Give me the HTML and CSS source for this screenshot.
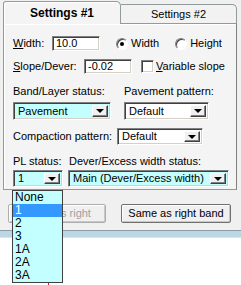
FILE: index.html
```html
<!DOCTYPE html>
<html>
<head>
<meta charset="utf-8">
<link rel="stylesheet" href="styles.css">
</head>
<body>
<div class="window">
  <div class="tabs">
    <div class="tab tab-active">Settings #1</div>
    <div class="tab tab-idle">Settings #2</div>
  </div>
  <div class="panel">
    <div class="row row1">
      <span class="lbl lbl-width"><u>W</u>idth:</span>
      <span class="edit edit-w">10.0</span>
      <span class="radio radio-on"></span><span class="rtext">Width</span>
      <span class="radio radio-off"></span><span class="rtext">Height</span>
    </div>
    <div class="row row2">
      <span class="lbl lbl-slope"><u>S</u>lope/Dever:</span>
      <span class="edit edit-s">-0.02</span>
      <span class="check"></span><span class="ctext"><u>V</u>ariable slope</span>
    </div>
    <div class="row row3">
      <span class="lbl lbl-band">Band/Layer status:</span>
      <span class="lbl">Pavement pattern:</span>
    </div>
    <div class="row row4">
      <span class="combo combo-cyan combo-band"><span class="ctxt">Pavement</span><span class="dd"></span></span>
      <span class="combo combo-pave"><span class="ctxt">Default</span><span class="dd"></span></span>
    </div>
    <div class="row row5">
      <span class="lbl lbl-comp">Compaction pattern:</span>
      <span class="combo combo-comp"><span class="ctxt">Default</span><span class="dd"></span></span>
    </div>
    <div class="row row6">
      <span class="lbl lbl-pl">PL status:</span>
      <span class="lbl">Dever/Excess width status:</span>
    </div>
    <div class="row row7">
      <span class="combo combo-cyan combo-pl"><span class="ctxt">1</span><span class="dd"></span></span>
      <span class="combo combo-cyan combo-dever"><span class="ctxt">Main (Dever/Excess width)</span><span class="dd"></span></span>
    </div>
  </div>
  <div class="buttons">
    <span class="btn btn-disabled btn-left">Same as right</span>
    <span class="btn btn-right">Same as right band</span>
  </div>
</div>
<div class="band"></div>
<div class="canvas"><div class="redmark"></div></div>

<div class="droplist">
  <div class="item">None</div>
  <div class="item item-sel">1</div>
  <div class="item">2</div>
  <div class="item">3</div>
  <div class="item">1A</div>
  <div class="item">2A</div>
  <div class="item">3A</div>
</div>
</body>
</html>
```

FILE: styles.css
```css
* { box-sizing: border-box; }
html, body { margin: 0; padding: 0; }
body {
  width: 241px;
  height: 285px;
  overflow: hidden;
  background: #ffffff;
  font-family: "Liberation Sans", Arial, sans-serif;
  font-size: 11px;
  line-height: 13px;
  color: #000;
  position: relative;
}
u { text-decoration: underline; text-underline-offset: 1px; }

.window {
  background: #f0f0f0;
  height: 230px;
  padding: 1px 0 0 3px;
}

.tabs {
  display: flex;
  align-items: flex-end;
  height: 22px;
}
.tab {
  display: flex;
  justify-content: center;
  align-items: center;
  border: 1px solid #919b9c;
  border-bottom: none;
  background: #f3f3f3;
}
.tab-active {
  width: 118px;
  height: 23px;
  margin-bottom: -1px;
  position: relative;
  z-index: 1;
  font-weight: bold;
  font-size: 12px;
  border-radius: 3px 5px 0 0;
  background: #f4f4f4;
  box-shadow: inset 1px 1px 0 #ffffff;
  padding-top: 1px;
}
.tab-idle {
  width: 116px;
  height: 19px;
  border-left: none;
  border-radius: 0 5px 0 0;
  padding-top: 1px;
  background: #f2f2f2;
}

.panel {
  width: 234px;
  height: 167px;
  border: 1px solid #919b9c;
  border-right-color: #808080;
  background: #f4f4f4;
  box-shadow: inset 1px 1px 0 #ffffff;
  padding: 12px 0 0 9px;
}

.row { display: flex; align-items: center; white-space: nowrap; }
.row1 { height: 15px; }
.row2 { height: 15px; margin-top: 8px; }
.row3 { margin-top: 11px; height: 13px; }
.row4 { margin-top: 4px; height: 18px; }
.row5 { margin-top: 8px; height: 17px; }
.row6 { margin-top: 10px; height: 13px; }
.row7 { margin-top: 2px; height: 17px; }

.lbl-width { width: 39px; }
.lbl-slope { width: 71px; }
.lbl-band { width: 111px; }
.lbl-comp { width: 104px; }
.lbl-pl { width: 56px; }

.edit {
  display: flex;
  align-items: center;
  height: 15px;
  background: #fff;
  border: 1px solid;
  border-color: #808080 #ffffff #ffffff #808080;
  box-shadow: inset 1px 1px 0 #404040, inset -1px -1px 0 #d4d0c8;
  padding-left: 3px;
}
.edit-w { width: 48px; }
.edit-s { width: 48px; }

.radio {
  position: relative;
  width: 12px;
  height: 12px;
  border-radius: 50%;
  background: #fff;
  border: 1px solid;
  border-color: #808080 #ffffff #ffffff #808080;
  box-shadow: inset 1px 1px 0 #404040;
}
.radio-on { margin-left: 16px; }
.radio-off { margin-left: 16px; }
.radio-on::after {
  content: "";
  position: absolute;
  left: 3px;
  top: 3px;
  width: 4px;
  height: 4px;
  border-radius: 50%;
  background: #000;
}
.rtext { margin-left: 3px; }

.check {
  width: 13px;
  height: 13px;
  margin-left: 9px;
  background: #fff;
  border: 1px solid;
  border-color: #808080 #ffffff #ffffff #808080;
  box-shadow: inset 1px 1px 0 #404040, inset -1px -1px 0 #d4d0c8;
}
.ctext { margin-left: 2px; }

.combo {
  display: flex;
  align-items: stretch;
  height: 100%;
  background: #fff;
  border: 1px solid;
  border-color: #808080 #ffffff #ffffff #808080;
  box-shadow: inset 1px 1px 0 #404040, inset -1px -1px 0 #d4d0c8;
  padding: 2px;
}
.combo-cyan { background: #c4ffff; }
.ctxt { flex: 1; display: flex; align-items: center; padding-left: 2px; overflow: hidden; }
.dd {
  position: relative;
  width: 16px;
  background: #f0f0f0;
  border: 1px solid;
  border-color: #ffffff #404040 #404040 #ffffff;
  box-shadow: inset -1px -1px 0 #808080;
}
.dd::after {
  content: "";
  position: absolute;
  left: 3px;
  top: 50%;
  margin-top: -2px;
  border-left: 4px solid transparent;
  border-right: 4px solid transparent;
  border-top: 4px solid #000;
}
.combo-band { width: 98px; margin-right: 13px; }
.combo-pave { width: 85px; }
.combo-comp { width: 86px; }
.combo-pl { width: 50px; margin-right: 5px; }
.combo-dever { width: 161px; }

.buttons {
  display: flex;
  margin-top: 14px;
}
.btn {
  display: flex;
  justify-content: center;
  align-items: center;
  height: 19px;
  background: #f0f0f0;
  border: 1px solid #707070;
  border-radius: 2px;
  box-shadow: inset 1px 1px 0 #ffffff, inset -1px -1px 0 #c8c8c8;
}
.btn-left { width: 98px; margin-left: 5px; }
.btn-right { width: 110px; margin-left: 15px; }
.btn-disabled { color: #a0a0a0; border-color: #adadad; }

.band {
  height: 8px;
  border-top: 1px solid #8c9ca8;
  background: #bcd6e4;
  border-bottom: 1px solid #d8e8f0;
}
.canvas { height: 47px; background: #fff; padding-top: 44px; }
.redmark {
  margin-left: 48px;
  width: 1px;
  height: 3px;
  background: #e02020;
}

.droplist {
  position: absolute;
  left: 12px;
  top: 190px;
  width: 51px;
  height: 93px;
  background: #c4ffff;
  border: 1px solid #404040;
  z-index: 5;
}
.item {
  height: 13px;
  line-height: 13px;
  padding-left: 2px;
  font-size: 12px;
}
.item-sel { background: #3399ff; color: #fff; }
```
